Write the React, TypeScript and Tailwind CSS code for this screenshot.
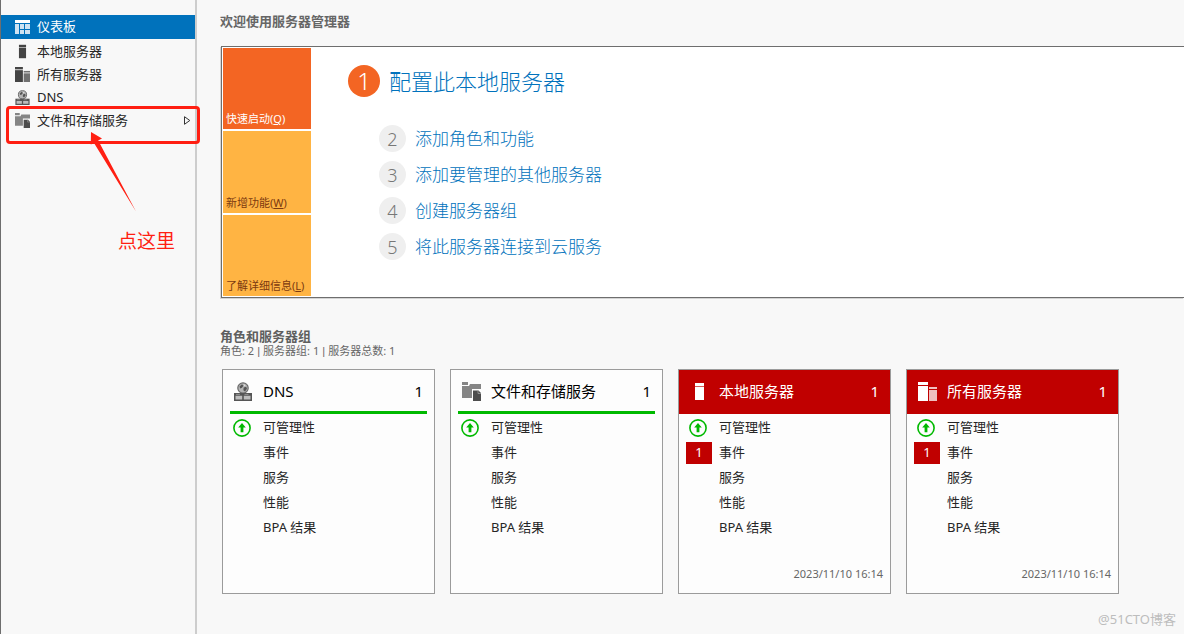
import type { ReactNode } from 'react'

type IconProps = { className?: string }

function DashboardIcon({ className }: IconProps) {
  return (
    <svg viewBox="0 0 15 14" className={className} aria-hidden="true">
      <rect width="15" height="3" fill="#fff" />
      <g fill="#cfe3f2">
        <rect y="4" width="4" height="10" />
        <rect x="5" y="4" width="4" height="5" />
        <rect x="10" y="4" width="5" height="5" />
        <rect x="5" y="10" width="4" height="4" />
        <rect x="10" y="10" width="5" height="4" />
      </g>
    </svg>
  )
}

function ServerIcon({ className }: IconProps) {
  return (
    <svg viewBox="0 0 19 19" className={className} fill="currentColor" aria-hidden="true">
      <rect x="5" y="1" width="9" height="3" />
      <rect x="5" y="4" width="9" height="1" opacity="0.35" />
      <rect x="5" y="5" width="9" height="13" />
    </svg>
  )
}

function ServersIcon({ className }: IconProps) {
  return (
    <svg viewBox="0 0 19 19" className={className} fill="currentColor" aria-hidden="true">
      <rect x="0" y="0" width="10" height="3" />
      <rect x="0" y="4" width="10" height="15" />
      <rect x="11" y="5" width="8" height="2" opacity="0.75" />
      <rect x="11" y="8" width="8" height="11" opacity="0.75" />
    </svg>
  )
}

function DnsIcon({ className }: IconProps) {
  return (
    <svg viewBox="0 0 18 19" className={className} aria-hidden="true">
      <circle cx="9" cy="6" r="5.2" fill="#b4b4b4" stroke="#6a6a6a" strokeWidth="1.2" />
      <path d="M5.5 4.5 8 2.2l1.5 1.6L8 5.8l-1.8.6zM9.6 5.6l2.6-.8.8 2-2 2.6-1.6-1.2z" fill="#555" />
      <path d="M9.3 2.2 11.6 3l-1 1.2z" fill="#e8e8e8" />
      <rect y="11" width="18" height="8" fill="#555" />
      <path d="M1.5 13.8h6.7v3.7H1.5zM9.8 13.8h6.7v3.7H9.8z" fill="#bdbdbd" />
      <path d="M2 12.4h4M10.5 12.4h4" stroke="#a0a0a0" strokeWidth=".8" />
    </svg>
  )
}

function StorageIcon({ className }: IconProps) {
  return (
    <svg viewBox="0 0 19 19" className={className} aria-hidden="true">
      <path d="M0 0h6v3H0zM0 4h7l1-2h11v5h-9v9H0z" fill="#858585" />
      <path d="M11 8.5h5.5l2.5 2.5v8h-8z" fill="#4d4d4d" />
      <path d="M16 8.5v3h3" fill="none" stroke="#a8a8a8" strokeWidth=".7" />
    </svg>
  )
}

function UpIcon() {
  return (
    <svg viewBox="0 0 18 18" className="size-[18px]" role="img" aria-label="正常">
      <circle cx="9" cy="9" r="8.1" fill="none" stroke="#00b900" strokeWidth="1.6" />
      <path d="M9 4 12.8 8.6H10.4V13.2H7.6V8.6H5.2z" fill="#00b900" />
    </svg>
  )
}

function NavItem({ icon, label, selected, expandable }: { icon: ReactNode; label: string; selected?: boolean; expandable?: boolean }) {
  return (
    <li>
      <a
        href="#"
        aria-current={selected ? 'page' : undefined}
        className={
          selected
            ? 'mb-px flex h-6 items-center bg-[#0072bc] pl-3.5 pr-1 text-white'
            : 'flex h-[23px] items-center pl-3.5 pr-1 text-[#262626]'
        }
      >
        <span className="flex w-[22px] shrink-0">{icon}</span>
        <span className="grow">{label}</span>
        {expandable && (
          <svg viewBox="0 0 7 9" className="h-[9px] w-[7px]" aria-hidden="true">
            <path d="M.5.7v7.6L5.8 4.5z" fill="none" stroke="#333" />
          </svg>
        )}
      </a>
    </li>
  )
}

function Tile({ label, accessKey, primary }: { label: string; accessKey: string; primary?: boolean }) {
  return (
    <button
      type="button"
      className={
        primary
          ? 'flex flex-1 items-end bg-[#f36523] px-[3px] pb-0.5 text-left text-[11px] leading-4 text-white'
          : 'flex flex-1 items-end bg-[#ffb443] px-[3px] pb-0.5 text-left text-[11px] leading-4 text-[#7c3a10]'
      }
    >
      <span>
        {label}(<span className="underline">{accessKey}</span>)
      </span>
    </button>
  )
}

function Separator() {
  return <span className="font-['Liberation_Sans',sans-serif]"> | </span>
}

const steps = ['添加角色和功能', '添加要管理的其他服务器', '创建服务器组', '将此服务器连接到云服务']
const metrics = ['可管理性', '事件', '服务', '性能', 'BPA 结果']

type Group = { title: string; icon: ReactNode; alert?: boolean; time?: string }

const groups: Group[] = [
  { title: 'DNS', icon: <DnsIcon className="h-[19px] w-[18px]" /> },
  { title: '文件和存储服务', icon: <StorageIcon className="size-[19px]" /> },
  { title: '本地服务器', icon: <ServerIcon className="size-[19px]" />, alert: true, time: '2023/11/10 16:14' },
  { title: '所有服务器', icon: <ServersIcon className="size-[19px]" />, alert: true, time: '2023/11/10 16:14' },
]

function GroupCard({ title, icon, alert, time }: Group) {
  return (
    <article className="flex min-h-[225px] w-[213px] shrink-0 flex-col border border-[#9b9b9b] bg-[#fdfdfd]">
      <header className={alert ? 'bg-[#c00000] px-[7px] text-white' : 'px-[7px] text-black'}>
        <div
          className={
            alert
              ? 'flex h-11 items-center pb-0.5 text-[15px]'
              : 'flex h-11 items-center border-b-3 border-[#00b900] pt-px text-[15px]'
          }
        >
          <span className="flex w-[33px] shrink-0 pl-1">{icon}</span>
          <h3 className="grow">{title}</h3>
          <span className="pr-1">1</span>
        </div>
      </header>
      <ul className="pl-[7px] pt-px text-[13px] text-[#262626]">
        {metrics.map((metric, i) => (
          <li key={metric} className="flex h-[25px] items-center">
            <span className="flex w-[33px] shrink-0">
              {i === 0 && (
                <span className="pl-[3px]">
                  <UpIcon />
                </span>
              )}
              {i === 1 && alert && (
                <span className="flex h-[22px] w-[26px] items-center justify-center bg-[#c00000] text-white">1</span>
              )}
            </span>
            {metric}
          </li>
        ))}
      </ul>
      {time && <time className="mt-auto pb-[11px] pr-[7px] text-right text-[11px] leading-4 text-[#666]">{time}</time>}
    </article>
  )
}

export default function App() {
  return (
    <div className="flex min-h-screen overflow-hidden bg-[#f8f8f8] font-['Noto_Sans','Noto_Sans_CJK_SC',sans-serif]">
      <aside className="relative w-[197px] shrink-0 border-l border-r-2 border-l-[#6e6e6e] border-r-[#cdcdcd]">
        <nav className="pt-[15px] text-[13px]">
          <ul>
            <NavItem selected label="仪表板" icon={<DashboardIcon className="h-[14px] w-[15px]" />} />
            <NavItem label="本地服务器" icon={<span className="text-[#444]"><ServerIcon className="size-[15px]" /></span>} />
            <NavItem label="所有服务器" icon={<span className="text-[#444]"><ServersIcon className="size-[15px]" /></span>} />
            <NavItem label="DNS" icon={<DnsIcon className="h-[15px] w-[15px]" />} />
            <NavItem expandable label="文件和存储服务" icon={<StorageIcon className="size-[15px]" />} />
          </ul>
        </nav>
        <div className="absolute left-[5px] top-[106px] z-10 h-[38px] w-[194px] rounded-sm border-3 border-[#ff1f12]" />
        <svg viewBox="0 0 48 80" className="absolute left-[89px] top-[132px] z-10 h-20 w-12" aria-hidden="true">
          <path d="M1 0 12 6.5 8.2 8.5 46 79.5 4 11 .8 12.6z" fill="#ff1f12" />
        </svg>
        <p className="absolute left-[117px] top-[227px] text-[19px] leading-7 text-[#ff1f12]">点这里</p>
      </aside>

      <main className="min-w-0 grow pl-[23px] pt-[11px]">
        <h1 className="text-[13px] font-bold leading-5 text-[#666]">欢迎使用服务器管理器</h1>

        <section className="ml-px mt-[15px] flex border-y border-l border-[#6e6e6e] bg-white p-px shadow-[-1px_1px_0_#d4d4d4]">
          <div className="flex min-h-[248px] w-[88px] shrink-0 flex-col gap-0.5">
            <Tile primary label="快速启动" accessKey="Q" />
            <Tile label="新增功能" accessKey="W" />
            <Tile label="了解详细信息" accessKey="L" />
          </div>
          <div className="pl-[37px] pt-[17px] font-light text-[#0072bc]">
            <a href="#" className="flex items-center gap-[9px] text-[22px] leading-8">
              <span className="flex size-8 items-center justify-center rounded-full bg-[#f36523] text-2xl text-white">1</span>
              配置此本地服务器
            </a>
            <ol className="flex flex-col gap-[9px] pl-[31px] pt-7">
              {steps.map((step, i) => (
                <li key={step}>
                  <a href="#" className="flex items-center gap-[9px] text-[17px] leading-6">
                    <span className="flex size-[27px] items-center justify-center rounded-full bg-[#efefef] text-lg text-[#777]">
                      {i + 2}
                    </span>
                    {step}
                  </a>
                </li>
              ))}
            </ol>
          </div>
        </section>

        <section className="pt-[30px]">
          <h2 className="text-[13px] font-bold leading-4 text-[#5f5f5f]">角色和服务器组</h2>
          <p className="text-[11px] leading-[14px] text-[#666]">
            角色: 2<Separator />服务器组: 1<Separator />服务器总数: 1
          </p>
          <div className="flex gap-[15px] pl-0.5 pt-[11px]">
            {groups.map((group) => (
              <GroupCard key={group.title} {...group} />
            ))}
          </div>
        </section>
      </main>
      <p className="absolute bottom-[7px] right-2 text-[13px] leading-4 text-[#bdbdbd]">@51CTO博客</p>
    </div>
  )
}
